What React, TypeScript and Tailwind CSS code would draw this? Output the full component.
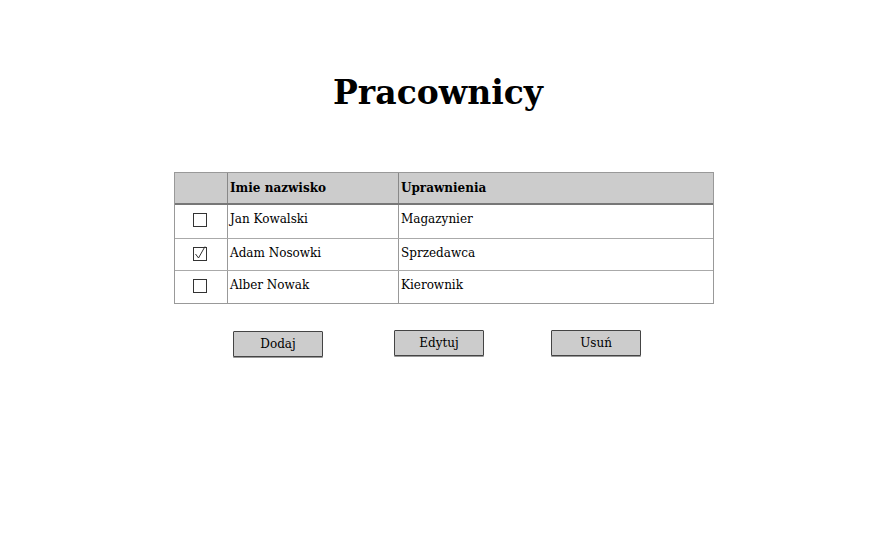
import { ReactNode } from 'react';

const serif = { fontFamily: '"DejaVu Serif", serif' };

const employees = [
  { name: 'Jan Kowalski', role: 'Magazynier', checked: false },
  { name: 'Adam Nosowki', role: 'Sprzedawca', checked: true },
  { name: 'Alber Nowak', role: 'Kierownik', checked: false },
];

const Checkbox = ({ checked }: { checked: boolean }) => (
  <svg width="16" height="16" viewBox="0 0 16 16" className="block">
    <rect x="1.5" y="1.5" width="13" height="13" fill="white" stroke="#333" strokeWidth="1" />
    {checked && <path d="M3.5 8 L6.5 12 L13 0.5" fill="none" stroke="#333" strokeWidth="1" />}
  </svg>
);

const Button = ({ children, className }: { children: ReactNode; className?: string }) => (
  <button
    className={`w-[90px] h-[26px] bg-[#cccccc] border border-[#444] rounded-[1px] text-[12px] text-black shadow-[0_1px_0_#999] ${className ?? ''}`}
  >
    {children}
  </button>
);

export default function App() {
  return (
    <div className="w-[891px] h-[536px] bg-white text-black" style={serif}>
      <h1 className="pt-[71px] text-center text-[33px] font-bold leading-[44px] pr-[15px]">Pracownicy</h1>

      <div className="pl-[174px] pt-[57px]">
        <div className="w-[540px] border border-[#999] text-[12px]">
          <div className="flex h-[32px] bg-[#cccccc] border-b-2 border-[#777] font-bold">
            <div className="w-[53px] border-r border-[#888]" />
            <div className="w-[171px] border-r border-[#888] pl-[2px] flex items-center">Imie nazwisko</div>
            <div className="flex-1 pl-[2px] flex items-center">Uprawnienia</div>
          </div>
          {employees.map((e, i) => (
            <div
              key={e.name}
              className={`flex ${i === 0 ? 'h-[34px]' : 'h-[32px]'} ${i < employees.length - 1 ? 'border-b border-[#aaa]' : ''}`}
            >
              <div className="w-[53px] border-r border-[#999] flex justify-center pt-[7px] pr-[2px]">
                <Checkbox checked={e.checked} />
              </div>
              <div className="w-[171px] border-r border-[#999] pl-[2px] pt-[5px]">{e.name}</div>
              <div className="flex-1 pl-[2px] pt-[5px]">{e.role}</div>
            </div>
          ))}
        </div>

        <div className="flex pt-[26px] pl-[59px]">
          <Button className="mt-[1px]">Dodaj</Button>
          <Button className="ml-[71px]">Edytuj</Button>
          <Button className="ml-[67px]">Usuń</Button>
        </div>
      </div>
    </div>
  );
}
